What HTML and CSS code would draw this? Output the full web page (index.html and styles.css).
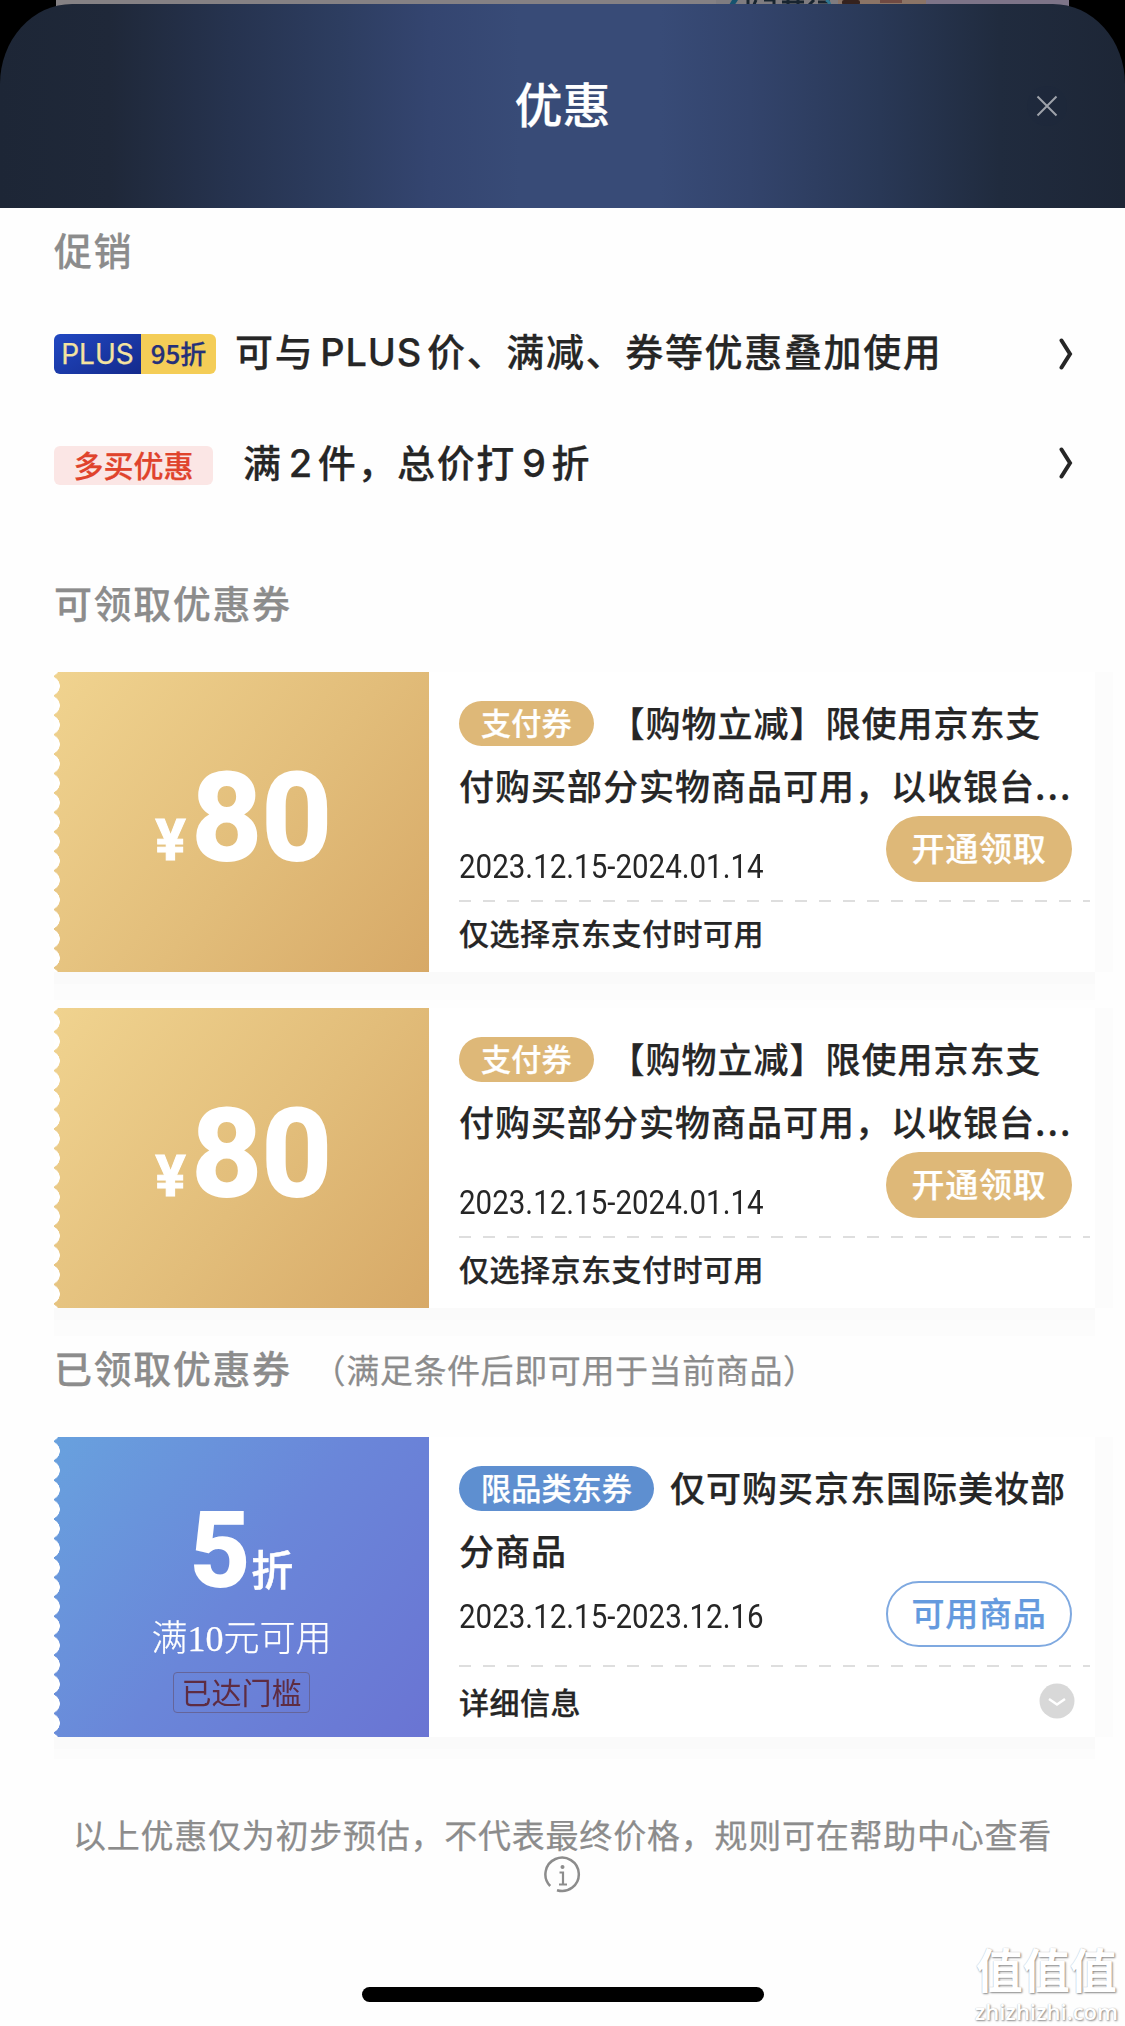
FILE: index.html
```
<!DOCTYPE html>
<html lang="zh-CN">
<head>
  <meta charset="UTF-8">
  <meta name="viewport" content="width=device-width, initial-scale=1.0">
  <title>优惠</title>
  <link rel="stylesheet" href="styles.css">
</head>
<body>
  <div class="top">
    <svg class="behind" viewBox="0 0 1012 12" preserveAspectRatio="none">
      <rect x="660" y="0" width="210" height="12" fill="#7f7c80"/>
      <path d="M669 12L676 0H682L674 12Z" fill="#16536f"/>
      <path d="M692 0V5M700 0L697 7M708 0H718V6M726 2H748M732 0V9M742 0V9M758 0L752 6M762 2H774" stroke="#18242f" stroke-width="3" fill="none"/>
      <path d="M772 9Q776 3 770 0" stroke="#2f7690" stroke-width="3" fill="none"/>
      <rect x="782" y="0" width="88" height="12" fill="#8b7466"/>
      <rect x="786" y="0" width="18" height="5" rx="2" fill="#35221e"/>
      <rect x="824" y="0" width="22" height="3" fill="#704a42"/>
    </svg>
    <header class="header">
      <h1>优惠</h1>
      <svg class="close" viewBox="0 0 42 42">
        <circle cx="21" cy="21" r="20" fill="#1d273b" opacity=".45"/>
        <path d="M11.500 11.500L30.500 30.500M30.500 11.500L11.500 30.500" stroke="#9fa3ab" stroke-width="2"/>
      </svg>
    </header>
  </div>

  <main class="content">
    <h2>促销</h2>
    <div class="promo">
      <span class="plus"><b>PLUS</b><i>95折</i></span>
      <span class="promo-text">可与<span class="en plus-word">PLUS</span>价、满减、券等优惠叠加使用</span>
      <svg class="arrow" viewBox="0 0 14 32"><path d="M2.500 2.500L11 16L2.500 29.500"/></svg>
    </div>
    <div class="promo promo-more">
      <span class="more">多买优惠</span>
      <span class="promo-text">满<span class="en">2</span>件，总价打<span class="en">9</span>折</span>
      <svg class="arrow" viewBox="0 0 14 32"><path d="M2.500 2.500L11 16L2.500 29.500"/></svg>
    </div>

    <h2 class="title-get">可领取优惠券</h2>

    <div class="coupon gold">
      <div class="ticket"><div class="price"><small>¥</small>80</div></div>
      <div class="info">
        <div class="name"><span class="tag">支付券</span>【购物立减】限使用京东支<br>付购买部分实物商品可用，以收银台<span class="dots">...</span></div>
        <div class="row"><span class="date">2023.12.15-2024.01.14</span><span class="btn">开通领取</span></div>
        <div class="dash"></div>
        <div class="note">仅选择京东支付时可用</div>
      </div>
    </div>

    <div class="coupon gold">
      <div class="ticket"><div class="price"><small>¥</small>80</div></div>
      <div class="info">
        <div class="name"><span class="tag">支付券</span>【购物立减】限使用京东支<br>付购买部分实物商品可用，以收银台<span class="dots">...</span></div>
        <div class="row"><span class="date">2023.12.15-2024.01.14</span><span class="btn">开通领取</span></div>
        <div class="dash"></div>
        <div class="note">仅选择京东支付时可用</div>
      </div>
    </div>

    <h2 class="title-got">已领取优惠券<span>（满足条件后即可用于当前商品）</span></h2>

    <div class="coupon blue">
      <div class="ticket">
        <div class="discount">5<small>折</small></div>
        <div class="limit">满10元可用</div>
        <div class="reach">已达门槛</div>
      </div>
      <div class="info">
        <div class="name"><span class="tag">限品类东券</span>仅可购买京东国际美妆部<br>分商品</div>
        <div class="row"><span class="date">2023.12.15-2023.12.16</span><span class="btn">可用商品</span></div>
        <div class="dash"></div>
        <div class="note">详细信息
          <svg class="down" viewBox="0 0 36 36"><circle cx="18" cy="18" r="17.500" fill="#d8d8d8"/><path d="M10 16L18 21.500L26 16" fill="none" stroke="#fff" stroke-width="2.500"/></svg>
        </div>
      </div>
    </div>
  </main>

  <footer class="footer">
    <p>以上优惠仅为初步预估，不代表最终价格，规则可在帮助中心查看</p>
    <svg class="tip" viewBox="0 0 38 38">
      <path d="M13 34.200A16.700 16.700 0 1 0 6.200 30" fill="none" stroke="#8c8c8c" stroke-width="2.500"/>
      <circle cx="18.500" cy="11" r="2" fill="#8c8c8c"/>
      <path d="M15.500 16.500H19V28M15 28.500H23" fill="none" stroke="#8c8c8c" stroke-width="2.200"/>
    </svg>
    <div class="home-bar"></div>
  </footer>

  <div class="watermark"><strong>值值值</strong><span>zhizhizhi.com</span></div>
</body>
</html>
```
FILE: styles.css
```
* { box-sizing: border-box; }
body {
  margin: 0;
  width: 1125px;
  height: 2026px;
  overflow: hidden;
  position: relative;
  background: #fefefe;
  color: #262626;
  font-family: "Noto Sans CJK SC", sans-serif;
  font-weight: 500;
  -webkit-text-stroke: .25px currentColor;
}
h1, h2, p { margin: 0; }

/* header */
.top {
  height: 208px;
  padding-top: 4px;
  background: linear-gradient(90deg, #000 56px, #858184 56px, #858184 850px, #7d7488 930px, #7d7488 1069px, #000 1069px) 0 0 / 100% 12px no-repeat #000;
  position: relative;
}
.behind {
  position: absolute;
  left: 56px;
  top: 0;
  width: 1012px;
  height: 12px;
}
.header {
  position: relative;
  height: 204px;
  border-radius: 72px 72px 0 0 / 80px 80px 0 0;
  background: linear-gradient(90deg, #1d2636 0, #1f2839 110px, #26334f 230px, #2d3d60 340px, #344570 430px, #384b77 520px, #384b77 660px, #33446c 750px, #293856 880px, #202b3e 1000px, #1d2636 1125px);
  display: flex;
  justify-content: center;
}
.header h1 {
  color: #fff;
  font-size: 48px;
  font-weight: 500;
  line-height: 197px;
}
.close {
  position: absolute;
  right: 57px;
  top: 81px;
  width: 42px;
  height: 42px;
}

.content { padding: 13px 0 0 54px; }
h2 {
  height: 56px;
  line-height: 56px;
  color: #8c8c8c;
  font-size: 38px;
  font-weight: 500;
  letter-spacing: 1.6px;
}

/* promotion rows */
.promo {
  display: flex;
  align-items: center;
  height: 60px;
  margin-top: 47px;
  padding-right: 52px;
}
.promo-more { margin-top: 49px; }
.plus {
  display: flex;
  width: 162px;
  height: 40px;
  line-height: 38px;
  border-radius: 6px;
  overflow: hidden;
  font-size: 26px;
}
.plus b {
  width: 87px;
  background: linear-gradient(150deg, #2148c2, #142a8c);
  color: #f4e3a0;
  text-align: center;
  font-family: Inter, sans-serif;
  font-size: 28px;
  font-weight: 400;
  line-height: 41px;
}
.plus i {
  flex: 1;
  background: #f4cd57;
  color: #24307a;
  font-style: normal;
  text-align: center;
}
.more {
  width: 159px;
  height: 39px;
  margin-top: 5px;
  line-height: 36px;
  border-radius: 6px;
  background: #fbe6e5;
  color: #e0432c;
  font-size: 30px;
  text-align: center;
}
.promo-text {
  margin: -6px 0 0 19px;
  font-size: 38px;
  line-height: 56px;
  letter-spacing: 1.65px;
  white-space: nowrap;
}
.promo-more .promo-text { margin: -3px 0 0 30px; }
.en { font-family: Inter, sans-serif; margin: 0 4px 0 6px; }
.plus-word { margin: 0 5px 0 6px; letter-spacing: .8px; }
.arrow {
  width: 14px;
  height: 32px;
  margin-left: auto;
  fill: none;
  stroke: #262626;
  stroke-width: 4;
  stroke-linecap: round;
}

.title-get { margin-top: 81px; }
.title-get + .coupon { margin-top: 42px; }
.title-got { margin-top: 31px; }
.title-got span {
  font-size: 33px;
  font-weight: 400;
  letter-spacing: .6px;
  margin-left: 21px;
}
.title-got + .coupon { margin-top: 42px; }

/* coupons */
.coupon {
  display: flex;
  width: 1041px;
  height: 300px;
  background: #fff;
  box-shadow: 18px 0 0 #fcfcfc, 0 12px 0 #fafafa, 0 28px 0 #fcfcfc;
}
.coupon + .coupon { margin-top: 36px; }
.blue.coupon { box-shadow: 18px 0 0 #fcfcfc, 0 12px 0 #fafafa, 0 22px 0 #fcfcfc; }
.ticket {
  width: 375px;
  padding-top: 76px;
  color: #fff;
  text-align: center;
  -webkit-mask: radial-gradient(circle 10px at -4px 50%, transparent 9.5px, #000 10px) 0 4.300px / 100% 19.450px;
  mask: radial-gradient(circle 10px at -4px 50%, transparent 9.5px, #000 10px) 0 4.300px / 100% 19.450px;
}
.gold .ticket { background: linear-gradient(128deg, #f0d38f, #e2bd7a 55%, #d7a967); }
.blue .ticket { background: linear-gradient(128deg, #68a1de, #6a86d9 50%, #6a74d3); }
.price {
  font: 700 122px/142px Roboto, sans-serif;
  padding-left: 4px;
  -webkit-text-stroke: 2px #fff;
}
.price small { font-size: 57px; margin-right: 6px; -webkit-text-stroke: 1px #fff; }
.discount {
  height: 76px;
  font: 700 104px/76px Roboto, sans-serif;
  -webkit-text-stroke: 2px #fff;
}
.discount small {
  font: 500 42px/60px "Noto Sans CJK SC", sans-serif;
  -webkit-text-stroke: .5px #fff;
  margin-left: 2px;
}
.limit {
  margin-top: 24px;
  font: 300 36px/52px "Liberation Serif", "Noto Sans CJK SC", sans-serif;
}
.reach {
  width: 137px;
  height: 41px;
  margin: 7px auto 0;
  border: 1px solid #65659a;
  border-radius: 4px;
  color: #5e2c42;
  font-size: 30px;
  font-weight: 400;
  line-height: 37px;
  -webkit-text-stroke: 0;
}
.info {
  flex: 1;
  padding: 19px 0 0 30px;
}
.name {
  height: 125px;
  font-size: 35px;
  line-height: 62.5px;
  letter-spacing: 1px;
  white-space: nowrap;
}
.tag {
  display: inline-block;
  height: 45px;
  margin-right: 16px;
  padding: 0 22px;
  border-radius: 23px;
  background: #deb878;
  color: #fff;
  font-size: 30.2px;
  line-height: 42px;
  letter-spacing: 0;
  vertical-align: 2px;
}
.blue .tag { background: #5e8fd0; }
.dots { letter-spacing: 2px; }
.row {
  display: flex;
  justify-content: space-between;
  height: 84px;
  padding-right: 23px;
}
.date {
  width: 400px;
  padding-top: 30px;
  font: 400 34px/40px Roboto, sans-serif;
  transform: scaleX(.868);
  transform-origin: 0 0;
  -webkit-text-stroke: 0;
}
.blue .date { padding-top: 15px; }
.btn {
  width: 186px;
  height: 66px;
  border-radius: 33px;
  background: #deb878;
  color: #fff;
  font-size: 33px;
  line-height: 63px;
  letter-spacing: .8px;
  text-align: center;
}
.blue .btn {
  background: #fff;
  border: 2px solid #7fa9e0;
  color: #649ade;
  line-height: 59px;
}
.dash {
  width: 631px;
  height: 2px;
  background: repeating-linear-gradient(90deg, #dedede 0, #dedede 12px, transparent 12px, transparent 24px);
}
.note {
  display: flex;
  align-items: center;
  justify-content: space-between;
  height: 60px;
  padding-right: 20px;
  font-size: 30px;
  letter-spacing: .5px;
}
.blue .note { height: 67px; }
.down { width: 36px; height: 36px; }

/* footer */
.footer {
  display: flex;
  flex-direction: column;
  align-items: center;
  padding-top: 73px;
}
.footer p {
  color: #8c8c8c;
  font-size: 33px;
  font-weight: 400;
  line-height: 48px;
  letter-spacing: .76px;
  white-space: nowrap;
}
.tip { width: 38px; height: 38px; margin: -2px 0 0 1px; }
.home-bar {
  width: 402px;
  height: 15px;
  margin-top: 93px;
  border-radius: 8px;
  background: #000;
}

.watermark {
  position: absolute;
  right: 7px;
  bottom: 3px;
  display: flex;
  flex-direction: column;
  align-items: center;
  color: #fff;
  text-shadow: 1px 1px 2px #888, 0 0 1px #bbb;
  -webkit-text-stroke: 0;
}
.watermark strong { font-size: 47px; line-height: 62px; font-weight: 700; }
.watermark span { font: 600 22px/24px "Open Sans", sans-serif; }
```
